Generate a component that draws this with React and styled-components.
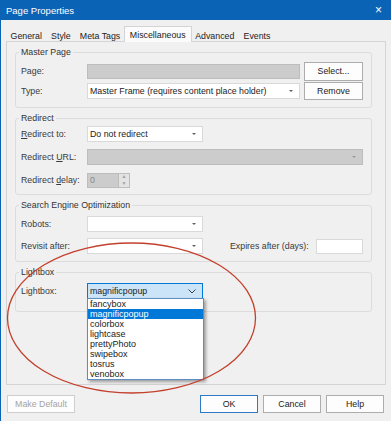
import React from 'react'
import styled, { createGlobalStyle } from 'styled-components'

const GlobalStyle = createGlobalStyle`
  html, body {
    margin: 0;
    padding: 0;
    background: #f0f0f0;
  }
  * {
    box-sizing: border-box;
  }
`

const Window = styled.div`
  position: relative;
  width: 391px;
  height: 421px;
  display: flex;
  flex-direction: column;
  background: #f0f0f0;
  border-left: 1px solid #0b63b6;
  font-family: 'Liberation Sans', Arial, sans-serif;
  font-size: 8.8px;
  color: #222;
  overflow: hidden;
`

const TitleBar = styled.div`
  height: 20px;
  display: flex;
  align-items: center;
  justify-content: space-between;
  padding: 0 9px 0 5px;
  background: #0b63b6;
  color: #fff;
  font-size: 9.5px;
`

const Close = styled.span`
  font-size: 12px;
  line-height: 1;
`

const TabStrip = styled.div`
  height: 21px;
  display: flex;
  align-items: flex-end;
  padding-left: 5px;
`

const Tab = styled.div`
  height: ${p => (p.$active ? '16px' : '14px')};
  display: flex;
  align-items: center;
  white-space: nowrap;
  padding: 0 ${p => (p.$active ? '5px' : '3.6px')};
  margin: 0 ${p => (p.$active ? '-1px' : '0')} -1px;
  background: ${p => (p.$active ? '#fbfbfb' : 'transparent')};
  border: 1px solid ${p => (p.$active ? '#d4d4d4' : 'transparent')};
  border-bottom: none;
  position: relative;
  z-index: ${p => (p.$active ? 1 : 0)};
  color: #222;
`

const Panel = styled.div`
  height: 344px;
  margin: 0 5px;
  padding: 4px 13px 0 8px;
  border: 1px solid #d4d4d4;
  display: flex;
  flex-direction: column;
  gap: 4px;
`

const Group = styled.fieldset`
  margin: 0;
  min-width: 0;
  padding: ${p => p.$pt}px 8px ${p => p.$pb}px 5px;
  border: 1px solid #dcdcdc;
  border-radius: 3px;
  display: flex;
  flex-direction: column;
  gap: ${p => p.$gap}px;
`

const Legend = styled.legend`
  margin-left: -2px;
  padding: 0 2px;
  line-height: 12px;
  color: #333;
`

const Row = styled.div`
  height: 20px;
  display: grid;
  grid-template-columns: 66px 1fr;
  align-items: center;
`

const Label = styled.span`
  color: #3a3a3a;
  white-space: nowrap;
`

const Controls = styled.div`
  display: flex;
  align-items: center;
  gap: ${p => p.$gap ?? 4}px;
`

const Field = styled.div`
  width: ${p => p.$w}px;
  height: 15px;
  margin-left: ${p => (p.$push ? 'auto' : '0')};
  background: ${p => (p.$disabled ? '#cccccc' : '#fff')};
  border: 1px solid ${p => (p.$disabled ? '#bdbdbd' : '#d9d9d9')};
`

const Combo = styled.div`
  position: relative;
  width: ${p => p.$w}px;
  height: 16px;
  flex-shrink: 0;
  display: flex;
  align-items: center;
  justify-content: space-between;
  padding: 0 6px 0 2px;
  white-space: nowrap;
  background: ${p => (p.$disabled ? '#cccccc' : p.$focus ? '#cce4f7' : '#fff')};
  border: 1px solid ${p => (p.$disabled ? '#bdbdbd' : p.$focus ? '#0078d7' : '#d9d9d9')};
  color: #222;
`

const Arrow = styled.span`
  width: 0;
  height: 0;
  border-left: 2px solid transparent;
  border-right: 2px solid transparent;
  border-top: 2px solid ${p => (p.$disabled ? '#9a9a9a' : '#606060')};
`

const Spin = styled.div`
  width: 43px;
  height: 15px;
  display: flex;
  border: 1px solid #bdbdbd;
  background: #cccccc;
`

const SpinValue = styled.span`
  flex: 1;
  padding-left: 2px;
  line-height: 13px;
  color: #8a8a8a;
  border-right: 1px solid #bdbdbd;
`

const SpinButtons = styled.div`
  width: 10px;
  display: flex;
  flex-direction: column;
  align-items: center;
  justify-content: space-around;
  background: #e3e3e3;
  color: #a0a0a0;
  font-size: 5px;
  line-height: 5px;
`

const Button = styled.div`
  width: ${p => p.$w || 58}px;
  height: ${p => p.$h || 18}px;
  flex-shrink: 0;
  display: flex;
  align-items: center;
  justify-content: center;
  white-space: nowrap;
  background: #fdfdfd;
  border: 1px solid ${p => (p.$default ? '#2f78c4' : p.$disabled ? '#cfcfcf' : '#adadad')};
  color: ${p => (p.$disabled ? '#a3a3a3' : '#222')};
`

const Expires = styled.span`
  margin-left: 27px;
  white-space: nowrap;
  color: #3a3a3a;
`

const DropList = styled.ul`
  position: absolute;
  top: 14px;
  left: -1px;
  width: 117px;
  margin: 0;
  padding: 0;
  list-style: none;
  background: #fff;
  border: 1px solid #5d8cc0;
  box-shadow: 2px 2px 3px rgba(0, 0, 0, 0.35);
  z-index: 2;
  font-size: 9px;
`

const DropItem = styled.li`
  height: 10px;
  line-height: 10px;
  padding-left: 2px;
  background: ${p => (p.$selected ? '#0078d7' : 'transparent')};
  color: ${p => (p.$selected ? '#fff' : '#222')};
`

const Footer = styled.div`
  display: flex;
  align-items: flex-start;
  gap: 5px;
  padding: 10px 7px 0 6px;
`

const Spacer = styled.div`
  flex: 1;
`

const Annotation = styled.svg`
  position: absolute;
  top: 0;
  left: -1px;
  pointer-events: none;
  z-index: 5;
`

const Chevron = () => (
  <svg width="8" height="5" viewBox="0 0 8 5">
    <polyline points="0.5,0.5 4,4 7.5,0.5" fill="none" stroke="#404040" strokeWidth="1" />
  </svg>
)

const lightboxOptions = ['fancybox', 'magnificpopup', 'colorbox', 'lightcase', 'prettyPhoto', 'swipebox', 'tosrus', 'venobox']

const tabs = ['General', 'Style', 'Meta Tags', 'Miscellaneous', 'Advanced', 'Events']

export default function App() {
  return (
    <>
      <GlobalStyle />
      <Window>
        <TitleBar>
          <span>Page Properties</span>
          <Close>×</Close>
        </TitleBar>
        <TabStrip>
          {tabs.map(t => (
            <Tab key={t} $active={t === 'Miscellaneous'}>{t}</Tab>
          ))}
        </TabStrip>
        <Panel>
          <Group $pt={3} $pb={6} $gap={0}>
            <Legend>Master Page</Legend>
            <Row>
              <Label>Page:</Label>
              <Controls>
                <Field $w={213} $disabled />
                <Button $w={59} $h={19}>Select...</Button>
              </Controls>
            </Row>
            <Row>
              <Label>Type:</Label>
              <Controls>
                <Combo $w={213}>
                  <span>Master Frame (requires content place holder)</span>
                  <Arrow />
                </Combo>
                <Button $w={59} $h={18}>Remove</Button>
              </Controls>
            </Row>
          </Group>
          <Group $pt={0} $pb={4} $gap={3}>
            <Legend>Redirect</Legend>
            <Row>
              <Label><u>R</u>edirect to:</Label>
              <Controls>
                <Combo $w={116}>
                  <span>Do not redirect</span>
                  <Arrow />
                </Combo>
              </Controls>
            </Row>
            <Row>
              <Label>Redirect <u>U</u>RL:</Label>
              <Controls>
                <Combo $w={276} $disabled>
                  <span />
                  <Arrow $disabled />
                </Combo>
              </Controls>
            </Row>
            <Row>
              <Label>Redirect <u>d</u>elay:</Label>
              <Controls>
                <Spin>
                  <SpinValue>0</SpinValue>
                  <SpinButtons>
                    <span>▲</span>
                    <span>▼</span>
                  </SpinButtons>
                </Spin>
              </Controls>
            </Row>
          </Group>
          <Group $pt={3} $pb={5} $gap={2}>
            <Legend>Search Engine Optimization</Legend>
            <Row>
              <Label>Robots:</Label>
              <Controls>
                <Combo $w={116}>
                  <span />
                  <Arrow />
                </Combo>
              </Controls>
            </Row>
            <Row>
              <Label>Revisit after:</Label>
              <Controls $gap={0}>
                <Combo $w={116}>
                  <span />
                  <Arrow />
                </Combo>
                <Expires>Expires after (days):</Expires>
                <Field $w={47} $push />
              </Controls>
            </Row>
          </Group>
          <Group $pt={3} $pb={10} $gap={0}>
            <Legend>Lightbox</Legend>
            <Row>
              <Label>Lightbox:</Label>
              <Controls>
                <Combo $w={116} $focus>
                  <span>magnificpopup</span>
                  <Chevron />
                  <DropList>
                    {lightboxOptions.map(o => (
                      <DropItem key={o} $selected={o === 'magnificpopup'}>{o}</DropItem>
                    ))}
                  </DropList>
                </Combo>
              </Controls>
            </Row>
          </Group>
        </Panel>
        <Footer>
          <Button $w={68} $disabled>Make Default</Button>
          <Spacer />
          <Button $default>OK</Button>
          <Button>Cancel</Button>
          <Button>Help</Button>
        </Footer>
        <Annotation width="391" height="421" viewBox="0 0 391 421">
          <ellipse cx="131.5" cy="318" rx="124" ry="75" fill="none" stroke="#c3402c" strokeWidth="1.3" />
        </Annotation>
      </Window>
    </>
  )
}
